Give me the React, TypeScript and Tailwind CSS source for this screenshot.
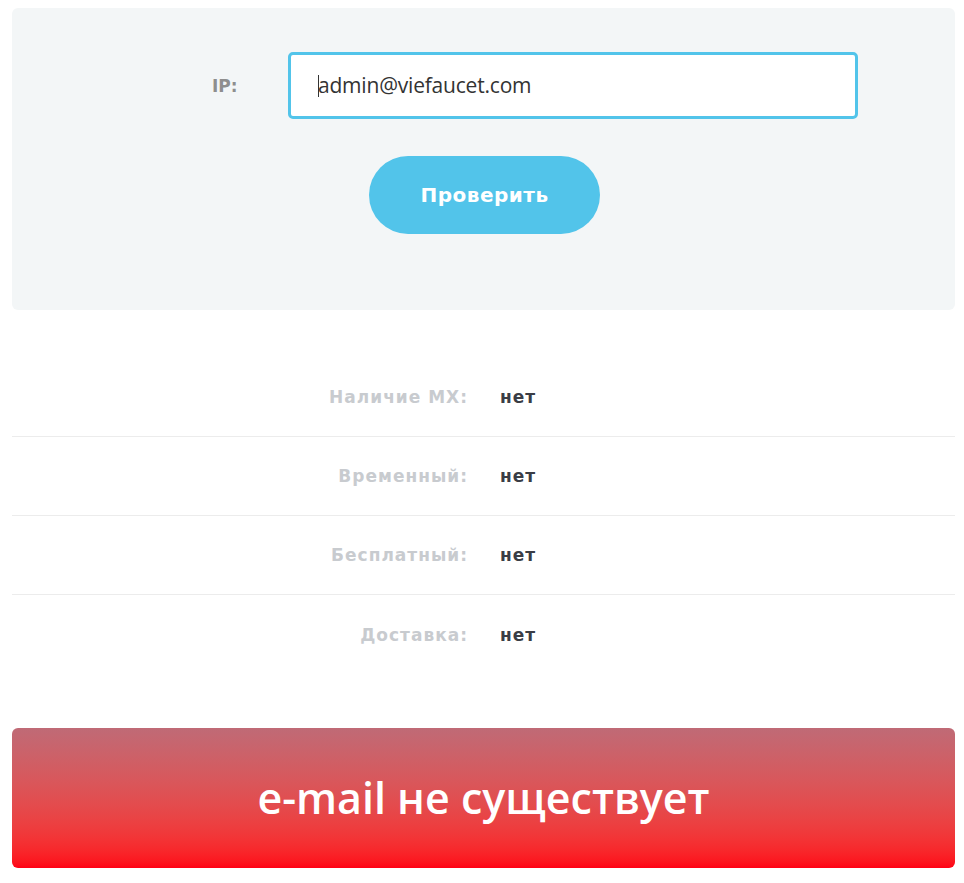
export default function App() {
  const rows = [
    ["Наличие MX:", "нет"],
    ["Временный:", "нет"],
    ["Бесплатный:", "нет"],
    ["Доставка:", "нет"],
  ];
  const mont = { fontFamily: "'DejaVu Sans', 'Noto Sans', sans-serif" };
  return (
    <div className="w-[964px] h-[883px] bg-white" style={mont}>
      <div className="pt-[8px] px-[12px] pr-[9px]">
        <div className="h-[302px] rounded-[6px] bg-[#f3f6f7] pt-[44px] flex flex-col">
          <div className="flex items-center h-[67px]">
            <div className="w-[276px] pl-[200px] pt-[3px] text-[17px] font-semibold text-[#8e8e8e]">IP:</div>
            <div className="w-[570px] h-[67px] border-[3px] border-[#52c4ea] rounded-[5px] bg-white flex items-center pl-[27px]">
              <span className="w-px h-[22px] bg-[#333] -mr-px"></span>
              <span className="text-[21px] text-[#333]" style={{ fontFamily: "'Open Sans', sans-serif", letterSpacing: "-0.2px" }}>admin@viefaucet.com</span>
            </div>
          </div>
          <div className="flex pl-[357px] mt-[37px]">
            <div className="w-[231px] h-[78px] rounded-full bg-[#52c4ea] flex items-center justify-center text-white text-[20px] font-bold tracking-[0.5px]">
              Проверить
            </div>
          </div>
        </div>
      </div>
      <div className="mt-[48px] mx-[12px] mr-[9px]">
        {rows.map(([l, v], i) => (
          <div key={i} className={"h-[79px] flex items-center pt-[2px] " + (i < 3 ? "border-b border-[#ececec]" : "")}>
            <div className="w-[456px] text-right text-[17px] font-bold text-[#c8cbcf] tracking-[1px]">{l}</div>
            <div className="pl-[32px] text-[17px] font-bold text-[#3a3d45] tracking-[1px]">{v}</div>
          </div>
        ))}
      </div>
      <div className="mt-[54px] mx-[12px] mr-[9px]">
        <div className="h-[140px] rounded-[6px] bg-gradient-to-b from-[#bf6a76] to-[#ff0015] flex items-center justify-center text-white text-[43px] font-semibold" style={{ fontFamily: "'Open Sans', sans-serif" }}>
          e-mail не существует
        </div>
      </div>
    </div>
  );
}
